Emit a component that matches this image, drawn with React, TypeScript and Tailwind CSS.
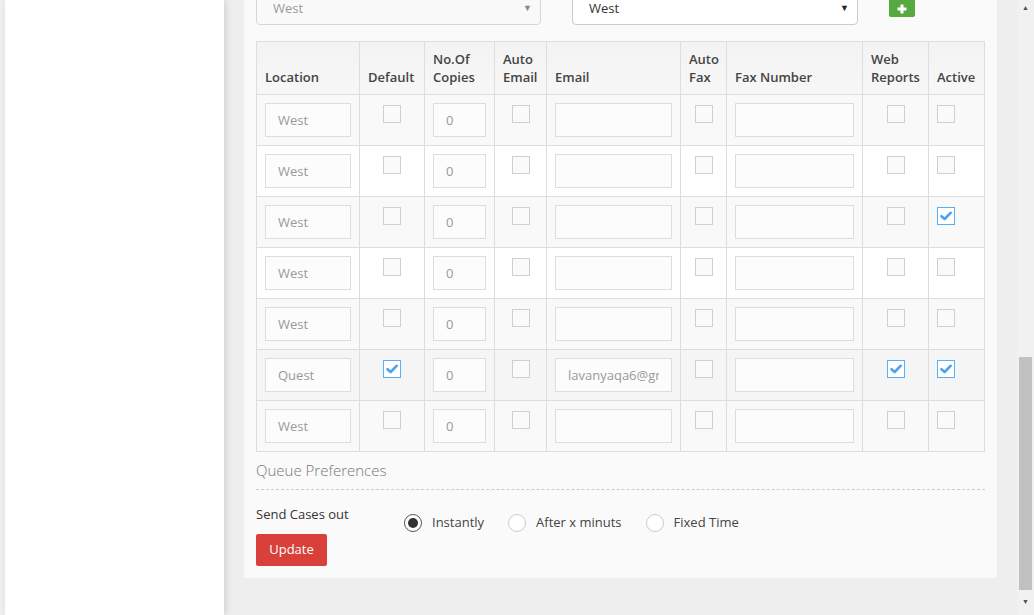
const ROWS = [
  { location: 'West', def: false, email: '', web: false, active: false },
  { location: 'West', def: false, email: '', web: false, active: false },
  { location: 'West', def: false, email: '', web: false, active: true },
  { location: 'West', def: false, email: '', web: false, active: false },
  { location: 'West', def: false, email: '', web: false, active: false },
  { location: 'Quest', def: true, email: 'lavanyaqa6@gmail.com', web: true, active: true, hover: true },
  { location: 'West', def: false, email: '', web: false, active: false },
];

const Check = ({ checked }: { checked?: boolean }) => (
  <span
    className={
      'mt-[2px] inline-flex h-[18px] w-[18px] items-center justify-center border ' +
      (checked ? 'border-[#5aaef5] bg-white' : 'border-[#cfcfcf] bg-[#fafafa]')
    }
  >
    {checked && (
      <svg width="12" height="10" viewBox="0 0 12 10">
        <path d="M1.5 5.2 L4.6 8 L10.6 1.8" fill="none" stroke="#4aa3f0" strokeWidth="2.6" strokeLinecap="round" strokeLinejoin="round" />
      </svg>
    )}
  </span>
);

const Field = ({ value, className = '' }: { value?: string; className?: string }) => (
  <div className="h-[34px] w-full border border-[#dddddd] bg-[#fcfcfc] px-3">
    <div className={'overflow-hidden whitespace-nowrap text-[13px] leading-[32px] text-[#999] ' + className}>{value}</div>
  </div>
);

const Radio = ({ checked, label }: { checked?: boolean; label: string }) => (
  <label className="flex items-center gap-[10px]">
    <span
      className={
        'flex h-[18px] w-[18px] items-center justify-center rounded-full border bg-white ' +
        (checked ? 'border-[#555]' : 'border-[#cccccc]')
      }
    >
      {checked && <span className="h-[10px] w-[10px] rounded-full bg-[#333]" />}
    </span>
    <span className="text-[13px] text-[#444]">{label}</span>
  </label>
);

const th = 'border border-[#dddddd] px-[8px] pb-[8px] align-bottom text-left font-semibold leading-[18px] text-[#444]';
const td = 'border border-[#dddddd] p-[8px] align-top';

export default function App() {
  return (
    <div
      className="flex h-[615px] w-[1034px] overflow-hidden bg-[#eeeeee]"
      style={{ fontFamily: '"Open Sans", "Noto Sans", sans-serif' }}
    >
      <aside className="ml-[5px] w-[219px] shrink-0 bg-white shadow-[2px_0_6px_rgba(0,0,0,0.12)]" />

      <main className="flex-1 pl-[20px] pr-[20px]">
        <div className="-mt-[9px] rounded-b-[3px] bg-[#fafafa] px-[12px] pb-[12px]">
          <div className="flex items-start gap-[31px]">
            <div className="relative h-[34px] w-[285px] rounded-[4px] border border-[#d6d6d6] bg-[#f9f9f9] pl-4 text-[13px] leading-[32px] text-[#999]">
              West
              <span className="absolute right-[8px] top-0 text-[9px] text-[#888]">▼</span>
            </div>
            <div className="relative h-[34px] w-[286px] rounded-[4px] border border-[#cccccc] bg-white pl-4 text-[13px] leading-[32px] text-[#333]">
              West
              <span className="absolute right-[8px] top-0 text-[9px] text-[#222]">▼</span>
            </div>
            <button className="-mt-px flex h-[27px] w-[26px] items-end justify-center rounded-[2px] bg-[#55a93f] pb-[3px] text-white">
              <svg width="10" height="10" viewBox="0 0 10 10">
                <path d="M5 0.5v9M0.5 5h9" stroke="white" strokeWidth="3" />
              </svg>
            </button>
          </div>

          <table className="mt-[16px] w-[729px] table-fixed border-collapse text-[13px]">
            <colgroup>
              <col className="w-[103px]" />
              <col className="w-[65px]" />
              <col className="w-[70px]" />
              <col className="w-[52px]" />
              <col className="w-[134px]" />
              <col className="w-[46px]" />
              <col className="w-[136px]" />
              <col className="w-[66px]" />
              <col className="w-[56px]" />
            </colgroup>
            <thead>
              <tr className="h-[53px] bg-gradient-to-b from-[#f3f3f3] to-[#f7f7f7]">
                <th className={th}>Location</th>
                <th className={th}>Default</th>
                <th className={th}>No.Of<br />Copies</th>
                <th className={th}>Auto<br />Email</th>
                <th className={th}>Email</th>
                <th className={th}>Auto<br />Fax</th>
                <th className={th}>Fax Number</th>
                <th className={th}>Web<br />Reports</th>
                <th className={th}>Active</th>
              </tr>
            </thead>
            <tbody>
              {ROWS.map((r, i) => (
                <tr key={i} className={'h-[51px] ' + (r.hover ? 'bg-[#f5f5f5]' : i % 2 === 0 ? 'bg-[#f9f9f9]' : 'bg-white')}>
                  <td className={td}><Field value={r.location} /></td>
                  <td className={td + ' text-center'}><Check checked={r.def} /></td>
                  <td className={td}><Field value="0" /></td>
                  <td className={td + ' text-center'}><Check /></td>
                  <td className={td}><Field value={r.email} className="text-[#777]" /></td>
                  <td className={td + ' text-center'}><Check /></td>
                  <td className={td}><Field /></td>
                  <td className={td + ' text-center'}><Check checked={r.web} /></td>
                  <td className={td + ' pl-[8px] text-left'}><Check checked={r.active} /></td>
                </tr>
              ))}
            </tbody>
          </table>

          <div className="mt-[8px] border-b border-dashed border-[#cccccc] pb-[8px] text-[15px] font-light leading-[21px] text-[#777]">
            Queue Preferences
          </div>

          <div className="mt-[15px] flex">
            <div className="w-[148px]">
              <div className="text-[13px] leading-[18px] text-[#333]">Send Cases out</div>
              <button className="mt-[11px] h-[32px] w-[71px] rounded-[2px] bg-[#d9403a] text-[13px] text-white">Update</button>
            </div>
            <div className="mt-[9px] flex h-[18px] items-center gap-[24px]">
              <Radio checked label="Instantly" />
              <Radio label="After x minuts" />
              <Radio label="Fixed Time" />
            </div>
          </div>
        </div>
      </main>

      <div className="flex w-[17px] shrink-0 flex-col bg-[#f1f1f1]">
        <div className="flex h-[17px] items-center justify-center text-[7px] text-[#505050]">▲</div>
        <div className="h-[340px]" />
        <div className="mx-[2px] h-[233px] bg-[#c1c1c1]" />
        <div className="flex flex-1 items-center justify-center text-[7px] text-[#505050]">▼</div>
      </div>
    </div>
  );
}
